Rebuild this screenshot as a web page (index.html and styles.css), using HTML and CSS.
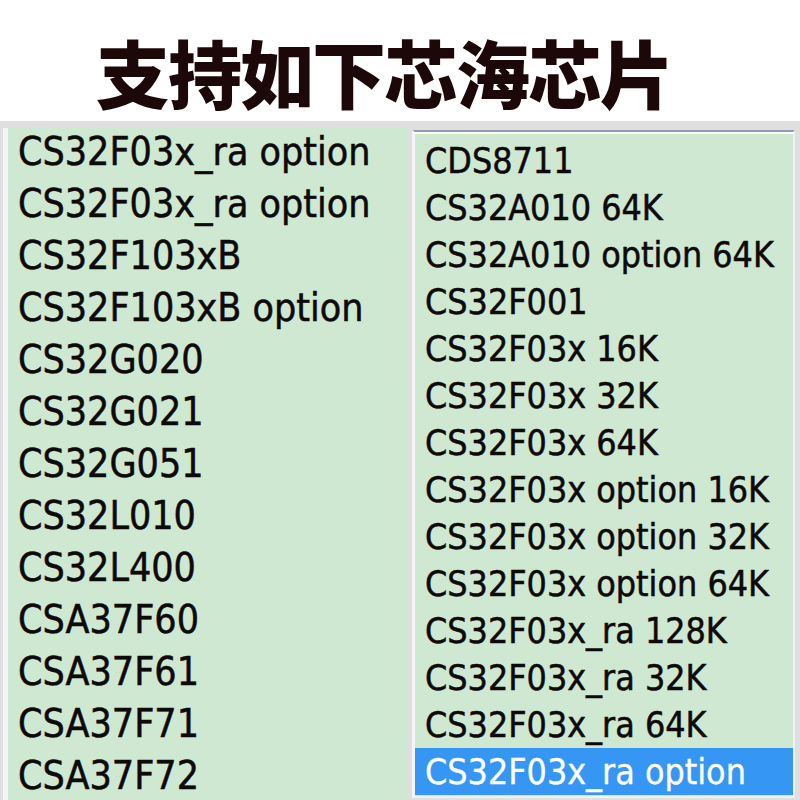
FILE: index.html
```html
<!DOCTYPE html>
<html lang="zh-CN">
<head>
    <meta charset="UTF-8">
    <title>支持如下芯海芯片</title>
    <link rel="stylesheet" href="styles.css">
</head>
<body>
    <h1 class="title">支持如下芯海芯片</h1>
    <div class="lists">
        <div class="panel panel-left">
            <span class="edge-mark"></span>
            <ul class="chip-list">
                <li>CS32F03x_ra option</li>
                <li>CS32F03x_ra option</li>
                <li>CS32F103xB</li>
                <li>CS32F103xB option</li>
                <li>CS32G020</li>
                <li>CS32G021</li>
                <li>CS32G051</li>
                <li>CS32L010</li>
                <li>CS32L400</li>
                <li>CSA37F60</li>
                <li>CSA37F61</li>
                <li>CSA37F71</li>
                <li>CSA37F72</li>
            </ul>
        </div>
        <div class="panel panel-right">
            <ul class="chip-list">
                <li>CDS8711</li>
                <li>CS32A010 64K</li>
                <li>CS32A010 option 64K</li>
                <li>CS32F001</li>
                <li>CS32F03x 16K</li>
                <li>CS32F03x 32K</li>
                <li>CS32F03x 64K</li>
                <li>CS32F03x option 16K</li>
                <li>CS32F03x option 32K</li>
                <li>CS32F03x option 64K</li>
                <li>CS32F03x_ra 128K</li>
                <li>CS32F03x_ra 32K</li>
                <li>CS32F03x_ra 64K</li>
                <li class="selected">CS32F03x_ra option</li>
            </ul>
        </div>
    </div>
</body>
</html>
```

FILE: styles.css
```css
html, body {
    margin: 0;
    padding: 0;
    background: #ffffff;
    overflow: hidden;
}
body {
    width: 800px;
    height: 800px;
    font-family: "DejaVu Sans Condensed", "DejaVu Sans", sans-serif;
    font-stretch: condensed;
}
.title {
    margin: 0;
    height: 121px;
    padding-left: 96px;
    font-family: "Noto Sans CJK SC", sans-serif;
    font-weight: 900;
    font-size: 74px;
    line-height: 142px;
    letter-spacing: -2px;
    color: #1c0808;
    white-space: nowrap;
}
.lists {
    display: flex;
    align-items: flex-start;
    height: 679px;
    padding-top: 7px;
    background: #dfdfdf;
    box-sizing: border-box;
}
.panel {
    background: #cfe8d1;
    overflow: hidden;
    box-sizing: border-box;
}
.panel-left {
    position: relative;
    width: 405px;
    height: 672px;
    margin-left: 3px;
    border-left: 5px solid #f3f4f3;
    padding-left: 10px;
}
.edge-mark {
    position: absolute;
    left: -8px;
    top: 434px;
    width: 3px;
    height: 8px;
    background: #3b8fdc;
}
.panel-right {
    width: 383px;
    height: 668px;
    margin-left: 4px;
    margin-top: 2px;
    border-top: 2px solid #8d9db3;
    border-left: 3px solid #f4f5f4;
    border-right: 2px solid #f2f2f2;
    border-bottom: 2px solid #f2f2f2;
    box-shadow: inset 0 2px 0 #ffffff;
    padding-top: 5px;
}
.chip-list {
    list-style: none;
    margin: 0;
    padding: 0;
    color: #0e0a0a;
    white-space: nowrap;
    -webkit-text-stroke: 0.5px #0e0a0a;
}
.panel-left .chip-list {
    margin-top: -2px;
    font-size: 39px;
    line-height: 52px;
}
.panel-right .chip-list {
    font-size: 35.5px;
    line-height: 47px;
}
.panel-right .chip-list li {
    padding-left: 10px;
}
.chip-list .selected {
    background: #3597f3;
    color: #ffffff;
    -webkit-text-stroke: 0.3px #ffffff;
}
```
